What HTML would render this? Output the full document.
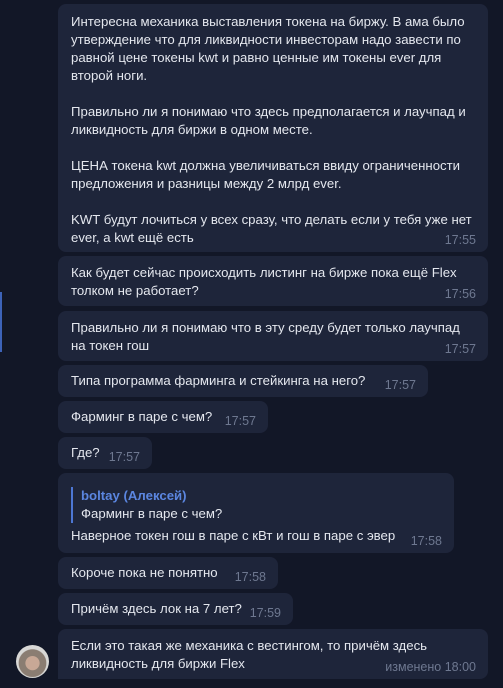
<!DOCTYPE html>
<html><head><meta charset="utf-8"><style>
body{margin:0;width:503px;height:688px;background:#121727;font-family:"Liberation Sans","DejaVu Sans",sans-serif;overflow:hidden;position:relative}
.b{position:absolute;left:58px;background:#1e253a;border-radius:8px;color:#e4e7ee;font-size:13.2px;line-height:18px;padding:8px 13px 0 13px;box-sizing:border-box;white-space:nowrap}
.t{position:absolute;right:12px;bottom:5px;color:#6e7890;font-size:12.5px;line-height:14px}
.bar{position:absolute;left:0;top:292px;width:2px;height:60px;background:#3d63b8}
.q{border-left:2px solid #4d77d4;padding-left:8px;margin:2px 0 4px 0;line-height:18px}
.q b{color:#5b86e0;font-weight:bold}
.av{position:absolute;left:16px;top:645px;width:33px;height:33px;border-radius:50%;background:radial-gradient(circle at 50% 55%,#c8a896 0 28%,#8a7d72 30% 55%,#d8d8d6 58%)}
</style></head><body>
<div class="bar"></div>
<div class="b" style="top:4px;width:430px;height:248px;padding-top:9px">Интересна механика выставления токена на биржу. В ама было<br>утверждение что для ликвидности инвесторам надо завести по<br>равной цене токены kwt и равно ценные им токены ever для<br>второй ноги.<br><br>Правильно ли я понимаю что здесь предполагается и лаучпад и<br>ликвидность для биржи в одном месте.<br><br>ЦЕНА токена kwt должна увеличиваться ввиду ограниченности<br>предложения и разницы между 2 млрд ever.<br><br>KWT будут лочиться у всех сразу, что делать если у тебя уже нет<br>ever, а kwt ещё есть<span class="t">17:55</span></div>
<div class="b" style="top:256px;width:430px;height:50px">Как будет сейчас происходить листинг на бирже пока ещё Flex<br>толком не работает?<span class="t">17:56</span></div>
<div class="b" style="top:311px;width:430px;height:50px">Правильно ли я понимаю что в эту среду будет только лаучпад<br>на токен гош<span class="t">17:57</span></div>
<div class="b" style="top:365px;width:370px;height:32px;padding-top:7px">Типа программа фарминга и стейкинга на него?<span class="t">17:57</span></div>
<div class="b" style="top:401px;width:210px;height:32px;padding-top:7px">Фарминг в паре с чем?<span class="t">17:57</span></div>
<div class="b" style="top:437px;width:94px;height:32px;padding-top:7px">Где?<span class="t">17:57</span></div>
<div class="b" style="top:473px;width:396px;height:80px;padding-top:12px"><div class="q"><b>boltay (Алексей)</b><br>Фарминг в паре с чем?</div>Наверное токен гош в паре с кВт и гош в паре с эвер<span class="t">17:58</span></div>
<div class="b" style="top:557px;width:220px;height:32px;padding-top:7px">Короче пока не понятно<span class="t">17:58</span></div>
<div class="b" style="top:593px;width:235px;height:32px;padding-top:7px">Причём здесь лок на 7 лет?<span class="t">17:59</span></div>
<div class="b" style="top:629px;width:430px;height:50px;border-bottom-left-radius:0">Если это такая же механика с вестингом, то причём здесь<br>ликвидность для биржи Flex<span class="t">изменено 18:00</span></div>
<div class="av"></div>
</body></html>
